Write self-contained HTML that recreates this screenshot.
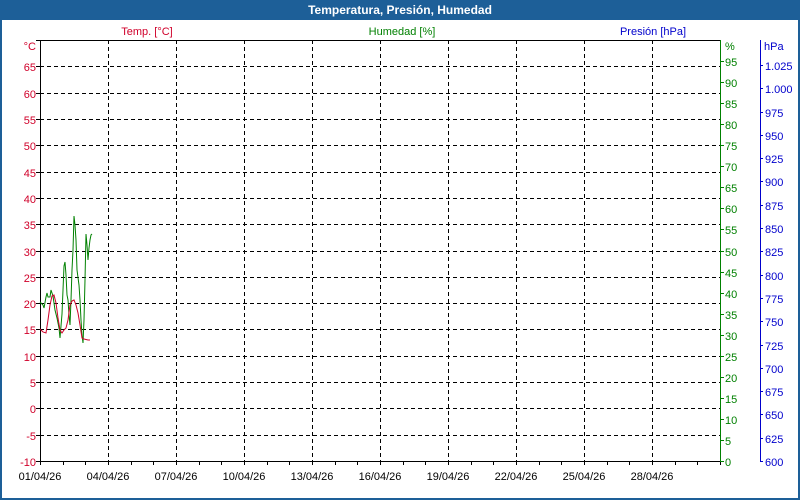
<!DOCTYPE html><html><head><meta charset="utf-8"><style>
body{margin:0;width:800px;height:500px;overflow:hidden;background:#fff;font-family:"Liberation Sans",sans-serif}
#t{position:absolute;left:0;top:0;width:800px;height:20px;background:#1d5f98;color:#fff;font-weight:bold;font-size:12px;text-align:center;line-height:20px}
#f{position:absolute;left:0;top:20px;width:796px;height:478px;border:2px solid #1d5f98;border-top:0}
svg{position:absolute;left:0;top:0}
text{font-family:"Liberation Sans",sans-serif;font-size:11px}
</style></head><body>
<div id="t">Temperatura, Presión, Humedad</div><div id="f"></div>
<svg id="s" width="800" height="500" xmlns="http://www.w3.org/2000/svg"></svg>
<script>
var s='';
var R='#d0002a',G='#008000',B='#0000cc';
s+='<text x="147" y="35" fill="'+R+'" text-anchor="middle">Temp. [°C]</text>';
s+='<text x="402" y="35" fill="'+G+'" text-anchor="middle">Humedad [%]</text>';
s+='<text x="653" y="35" fill="'+B+'" text-anchor="middle">Presión [hPa]</text>';
for(var v=-10;v<=70;v+=5){var y=Math.round(461-(v+10)*5.2625);
 if(v>-10&&v<70)s+='<line x1="40" x2="720" y1="'+(y+.5)+'" y2="'+(y+.5)+'" stroke="#000" stroke-dasharray="4,3"/>';
 s+='<line x1="36" x2="40" y1="'+(y+.5)+'" y2="'+(y+.5)+'" stroke="#000"/>';
 if(v<70)s+='<text x="36" y="'+(y+5)+'" fill="'+R+'" text-anchor="end">'+v+'</text>';}
s+='<text x="36" y="50" fill="'+R+'" text-anchor="end">°C</text>';
for(var d=0;d<=30;d++){var x=Math.round(40+d*22.667);
 s+='<line x1="'+(x+.5)+'" x2="'+(x+.5)+'" y1="461" y2="465" stroke="#000"/>';
 if(d%3==0){ if(d>0)s+='<line x1="'+(x+.5)+'" x2="'+(x+.5)+'" y1="40" y2="461" stroke="#000" stroke-dasharray="4,3"/>';
  if(d<30){var dd=('0'+(d+1)).slice(-2);s+='<text x="'+x+'" y="480" fill="#000" text-anchor="middle">'+dd+'/04/26</text>';}}}
s+='<line x1="40" x2="720" y1="40.5" y2="40.5" stroke="#000"/>';
s+='<line x1="40.5" x2="40.5" y1="40" y2="462" stroke="#000"/>';
s+='<line x1="40" x2="720" y1="461.5" y2="461.5" stroke="#000"/>';
s+='<line x1="720.5" x2="720.5" y1="40" y2="462" stroke="'+G+'"/>';
for(var v=0;v<=95;v+=5){var y=Math.round(461-v*4.21);s+='<line x1="720" x2="724" y1="'+(y+.5)+'" y2="'+(y+.5)+'" stroke="'+G+'"/><text x="725" y="'+(y+5)+'" fill="'+G+'">'+v+'</text>';}
s+='<text x="725" y="50" fill="'+G+'">%</text>';
s+='<line x1="760.5" x2="760.5" y1="40" y2="462" stroke="'+B+'"/>';
for(var v=600;v<=1025;v+=25){var y=Math.round(461-(v-600)*0.9318);var l=v>=1000?(v==1000?'1.000':'1.025'):v;s+='<line x1="760" x2="763" y1="'+(y+.5)+'" y2="'+(y+.5)+'" stroke="'+B+'"/><text x="765" y="'+(y+5)+'" fill="'+B+'">'+l+'</text>';}
s+='<text x="764" y="50" fill="'+B+'">hPa</text>';
var g=[[40,302],[43,305],[44,308],[46,297],[47,293],[48,297],[50,297],[51,290],[53,296],[55,310],[57,318],[59,328],[60,338],[62,314],[63,290],[64,266],[65,262],[66,275],[67,295],[68,300],[69,315],[70,325],[71,300],[72,270],[73,250],[74,216],[75,225],[76,240],[77,270],[79,285],[80,300],[81,320],[82,335],[83,343],[84,320],[85,280],[86,234],[87,245],[88,260],[89,248],[90,240],[91,235],[92,234]];
var r=[[40,329],[43,332],[46,333],[48,320],[50,305],[52,296],[54,295],[56,303],[58,318],[60,330],[62,333],[64,330],[66,328],[68,320],[70,305],[72,301],[74,300],[76,305],[78,313],[80,325],[82,338],[84,339],[88,340],[90,340]];
s+='<polyline fill="none" stroke="'+G+'" points="'+g.join(' ')+'"/>';
s+='<polyline fill="none" stroke="'+R+'" points="'+r.join(' ')+'"/>';
document.getElementById('s').innerHTML=s;
</script></body></html>
